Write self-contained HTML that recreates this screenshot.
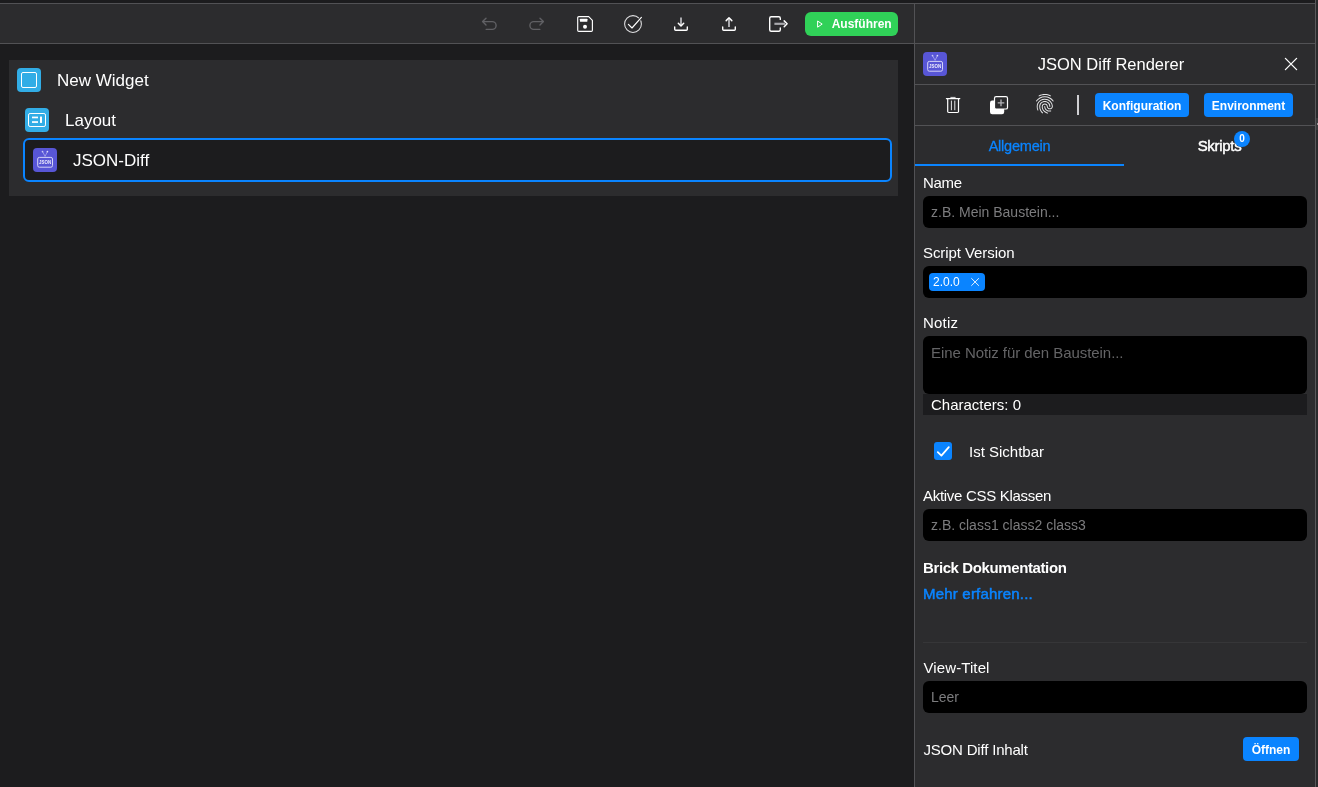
<!DOCTYPE html>
<html lang="de">
<head>
<meta charset="utf-8">
<title>JSON Diff Renderer</title>
<style>
*{box-sizing:border-box;margin:0;padding:0}
html,body{width:1318px;height:787px;overflow:hidden;background:#1c1c1e;font-family:"Liberation Sans",sans-serif;color:#fff}
.abs{position:absolute}
#root{position:relative;width:1318px;height:787px;overflow:hidden;will-change:transform}
/* frame lines */
.hl{position:absolute;height:1px;background:#525255}
.vl{position:absolute;width:1px;background:#525255}
#toolbar{position:absolute;left:0;top:4px;width:914px;height:39px;background:#2c2c2e}
#toolbarR{position:absolute;left:915px;top:4px;width:400px;height:39px;background:#2c2c2e}
#edgeR{position:absolute;left:1316px;top:0;width:2px;height:787px;background:#2a2a2c}
#rpanel{position:absolute;left:915px;top:44px;width:400px;height:743px;background:#2c2c2e}
.tbi{position:absolute;top:13px;width:20px;height:20px}
#run{position:absolute;left:805px;top:12px;width:93px;height:24px;border-radius:6px;background:#30d158;color:#fff;font-weight:700;font-size:12px;line-height:24px}
#run span{position:absolute;left:26.7px;top:0;white-space:nowrap}
/* tree */
#tree{position:absolute;left:9px;top:60px;width:889px;height:136px;background:#2c2c2e}
.ico{position:absolute;width:24px;height:24px;border-radius:4px}
.tlabel{position:absolute;font-size:17px;line-height:20px;white-space:nowrap;color:#fff}
#sel{position:absolute;left:23px;top:138px;width:869px;height:44px;border:2px solid #0a84ff;border-radius:6px;background:#1c1c1e}
/* right panel */
.lbl{position:absolute;left:923px;font-size:15px;line-height:18px;white-space:nowrap;color:#fff}
.inp{position:absolute;left:923px;width:384px;height:32px;background:#000;border-radius:6px}
.ph{position:absolute;left:8px;top:7px;font-size:14px;line-height:18px;color:#7c7c7e;white-space:nowrap}
.btn{position:absolute;background:#0a84ff;border-radius:4px;color:#fff;font-weight:700;font-size:13px;text-align:center;white-space:nowrap}
</style>
</head>
<body>
<div id="root">
  <!-- frame -->
  <div id="toolbar"></div>
  <div id="toolbarR"></div>
  <div id="rpanel"></div>
  <div id="edgeR"></div>
  <div class="hl" style="left:0;top:3px;width:1315px"></div>
  <div class="hl" style="left:0;top:43px;width:1316px"></div>
  <div class="vl" style="left:914px;top:3px;height:784px"></div>
  <div class="vl" style="left:1315px;top:0;height:787px;background:#58585a"></div>

  <div class="abs" style="left:1316px;top:118px;width:2px;height:12px;background:#3b3b3d"></div><div class="abs" style="left:1317px;top:123px;width:1px;height:2px;background:#98989a"></div>
  <!-- TOOLBAR ICONS -->
  
  <!-- undo -->
  <svg class="abs" style="left:479px;top:13px" width="20" height="20" viewBox="0 0 20 20" fill="none" stroke="#606064" stroke-width="1.4" stroke-linecap="round" stroke-linejoin="round"><path d="M7 5.2 L3.6 8.6 L7 12"/><path d="M3.8 8.6 H13.2 a3.9 3.9 0 0 1 0 7.8 H7.2"/></svg>
  <!-- redo -->
  <svg class="abs" style="left:527px;top:13px" width="20" height="20" viewBox="0 0 20 20" fill="none" stroke="#606064" stroke-width="1.4" stroke-linecap="round" stroke-linejoin="round"><path d="M13 5.2 L16.4 8.6 L13 12"/><path d="M16.2 8.6 H6.8 a3.9 3.9 0 0 0 0 7.8 H12.8"/></svg>
  <!-- save -->
  <svg class="abs" style="left:575px;top:14px" width="20" height="20" viewBox="0 0 20 20" fill="none"><path d="M3.8 2.6 H13.7 L17.4 6.3 V16.2 a1.1 1.1 0 0 1 -1.1 1.1 H3.8 a1.1 1.1 0 0 1 -1.1 -1.1 V3.7 a1.1 1.1 0 0 1 1.1 -1.1 Z" stroke="#fff" stroke-width="1.15" stroke-linejoin="round"/><rect x="4.9" y="4.8" width="7.5" height="2.9" rx="0.4" fill="#fff"/><circle cx="10" cy="12.8" r="2" fill="#fff"/></svg>
  <!-- check circle -->
  <svg class="abs" style="left:622px;top:13px" width="22" height="22" viewBox="0 0 22 22" fill="none" stroke-linecap="round" stroke-linejoin="round"><circle cx="11" cy="11" r="8.4" stroke="#e0e0e2" stroke-width="1.05"/><path d="M6.4 11.4 L10 15 L19.4 4.4" stroke="#2c2c2e" stroke-width="2.8"/><path d="M6.4 11.4 L10 15 L19.4 4.4" stroke="#fff" stroke-width="1.15"/></svg>
  <!-- download -->
  <svg class="abs" style="left:671px;top:14px" width="20" height="20" viewBox="0 0 20 20" fill="none" stroke-linecap="round" stroke-linejoin="round"><path d="M10 3.6 V11.6" stroke="#a9a9ad" stroke-width="2" stroke-linecap="butt"/><path d="M7.3 9.3 L10 12 L12.7 9.3" stroke="#fff" stroke-width="1.5"/><path d="M3.7 13 V15.3 a1 1 0 0 0 1 1 H15.3 a1 1 0 0 0 1 -1 V13" stroke="#fff" stroke-width="1.4"/></svg>
  <!-- upload -->
  <svg class="abs" style="left:719px;top:14px" width="20" height="20" viewBox="0 0 20 20" fill="none" stroke-linecap="round" stroke-linejoin="round"><path d="M10 5 V13" stroke="#a9a9ad" stroke-width="2" stroke-linecap="butt"/><path d="M7.2 6.6 L10 3.8 L12.8 6.6" stroke="#fff" stroke-width="1.5"/><path d="M3.7 13 V15.3 a1 1 0 0 0 1 1 H15.3 a1 1 0 0 0 1 -1 V13" stroke="#fff" stroke-width="1.4"/></svg>
  <!-- exit -->
  <svg class="abs" style="left:767px;top:14px" width="24" height="20" viewBox="0 0 24 20" fill="none" stroke-linecap="round" stroke-linejoin="round"><path d="M13.3 5.4 V4.2 a1.5 1.5 0 0 0 -1.5 -1.5 H4.2 a1.5 1.5 0 0 0 -1.5 1.5 V15.8 a1.5 1.5 0 0 0 1.5 1.5 H11.8 a1.5 1.5 0 0 0 1.5 -1.5 V13.9" stroke="#fff" stroke-width="1.4"/><path d="M7.4 9.8 H18" stroke="#a9a9ad" stroke-width="2.2" stroke-linecap="butt"/><path d="M17.2 6.9 L20.1 9.8 L17.2 12.7" stroke="#fff" stroke-width="1.5"/></svg>


  <div id="run"><svg class="abs" style="left:10px;top:7px" width="10" height="10" viewBox="0 0 10 10" fill="none" stroke="#fff" stroke-width="1" stroke-linejoin="round"><path d="M2.6 2 L7.2 5.1 L2.6 8.2 Z"/></svg><span id="runt">Ausführen</span></div>

  <!-- TREE -->
  <div id="tree"></div>
  <div id="sel"></div>
  
  <svg class="abs" style="left:17px;top:68px" width="24" height="24" viewBox="0 0 24 24" fill="none"><rect width="24" height="24" rx="4" fill="#32ade6"/><rect x="4.5" y="4.5" width="15" height="15" rx="1.5" stroke="#fff" stroke-width="1"/></svg>
  <svg class="abs" style="left:25px;top:108px" width="24" height="24" viewBox="0 0 24 24" fill="none"><rect width="24" height="24" rx="4" fill="#32ade6"/><rect x="3.5" y="5.5" width="17" height="13" rx="1.6" stroke="#fff" stroke-width="1"/><rect x="7" y="8.6" width="6" height="1.7" fill="#fff"/><rect x="7" y="13.2" width="6" height="1.7" fill="#fff"/><rect x="15" y="8.6" width="2" height="6.3" fill="#fff"/></svg>
  <svg class="abs" style="left:33px;top:148px" width="24" height="24" viewBox="0 0 24 24" fill="none"><rect width="24" height="24" rx="4" fill="#5856d6"/><rect x="4.7" y="9.4" width="14.8" height="9.8" rx="1.6" stroke="#d4d3f7" stroke-width="1"/><path d="M9.8 4 L12.1 8.4 L14.2 4" stroke="#a9a8ee" stroke-width="0.8" stroke-linecap="round" stroke-linejoin="round"/><circle cx="9.5" cy="3.6" r="0.85" fill="#c9c8f4"/><circle cx="14.4" cy="3.6" r="0.85" fill="#dddcf9"/><text x="12.1" y="16.3" text-anchor="middle" font-family="Liberation Sans, sans-serif" font-weight="700" font-size="6.2" fill="#ecebfd" textLength="12" lengthAdjust="spacingAndGlyphs">JSON</text></svg>

  <div class="tlabel" id="t1" style="left:57px;top:71px">New Widget</div>
  <div class="tlabel" id="t2" style="left:65px;top:111px">Layout</div>
  <div class="tlabel" id="t3" style="left:73px;top:151px">JSON-Diff</div>

  <!-- RIGHT PANEL -->
  
  <svg class="abs" style="left:923px;top:52px" width="24" height="24" viewBox="0 0 24 24" fill="none"><rect width="24" height="24" rx="4" fill="#5856d6"/><rect x="4.7" y="9.4" width="14.8" height="9.8" rx="1.6" stroke="#d4d3f7" stroke-width="1"/><path d="M9.8 4 L12.1 8.4 L14.2 4" stroke="#a9a8ee" stroke-width="0.8" stroke-linecap="round" stroke-linejoin="round"/><circle cx="9.5" cy="3.6" r="0.85" fill="#c9c8f4"/><circle cx="14.4" cy="3.6" r="0.85" fill="#dddcf9"/><text x="12.1" y="16.3" text-anchor="middle" font-family="Liberation Sans, sans-serif" font-weight="700" font-size="6.2" fill="#ecebfd" textLength="12" lengthAdjust="spacingAndGlyphs">JSON</text></svg>
  <div class="abs" id="title" style="left:915px;top:54px;width:392px;text-align:center;font-size:16.5px;line-height:20px;white-space:nowrap">JSON Diff Renderer</div>
  <svg class="abs" style="left:1283px;top:56px" width="16" height="16" viewBox="0 0 16 16" fill="none" stroke="#fff" stroke-width="1.3" stroke-linecap="round"><path d="M2.4 2.4 L13.6 13.6 M13.6 2.4 L2.4 13.6"/></svg>
  <div class="hl" style="left:915px;top:84px;width:400px"></div>
  
  <!-- trash -->
  <svg class="abs" style="left:943px;top:94px" width="20" height="22" viewBox="0 0 20 22" fill="none" stroke="#fff" stroke-linecap="round" stroke-linejoin="round"><path d="M3.4 4.6 H16.8" stroke-width="1.2"/><path d="M7.8 3.4 H12.2" stroke-width="0.9" stroke="#f0f0f2"/><path d="M4.7 4.8 V17.4 a1.1 1.1 0 0 0 1.1 1.1 H14.4 a1.1 1.1 0 0 0 1.1 -1.1 V4.8" stroke-width="1.2"/><path d="M8.4 7 V15.8 M11.8 7 V15.8" stroke-width="1" stroke="#e6e6e8"/></svg>
  <!-- duplicate -->
  <svg class="abs" style="left:988px;top:94px" width="22" height="22" viewBox="0 0 22 22" fill="none"><rect x="2" y="6.6" width="14.2" height="13.6" rx="2.2" fill="#fff"/><rect x="6.5" y="2.6" width="13" height="12.4" rx="1.6" fill="#2c2c2e" stroke="#fff" stroke-width="1.2"/><path d="M13 5.6 V12.2 M9.7 8.9 H16.3" stroke="#b4b4b8" stroke-width="1.3"/></svg>
  <!-- fingerprint -->
  <svg class="abs" style="left:1033.05px;top:92.4px" width="23.6" height="23.6" viewBox="0 0 24 24" fill="#e4e4e6"><path d="M17.81 4.47c-.08 0-.16-.02-.23-.06C15.66 3.42 14 3 12.01 3c-1.98 0-3.86.47-5.57 1.41-.24.13-.54.04-.68-.2-.13-.24-.04-.55.2-.68C7.82 2.52 9.86 2 12.01 2c2.13 0 3.99.47 6.03 1.52.25.13.34.43.21.67-.09.18-.26.28-.44.28zM3.5 9.72c-.1 0-.2-.03-.29-.09-.23-.16-.28-.47-.12-.7.99-1.4 2.25-2.5 3.75-3.27C9.98 4.04 14 4.03 17.15 5.65c1.5.77 2.76 1.86 3.75 3.25.16.22.11.54-.12.7-.23.16-.54.11-.7-.12-.9-1.26-2.04-2.25-3.39-2.94-2.87-1.47-6.54-1.47-9.4.01-1.36.7-2.5 1.7-3.4 2.96-.08.14-.23.21-.39.21zm6.25 12.07c-.13 0-.26-.05-.35-.15-.87-.87-1.34-1.43-2.01-2.64-.69-1.23-1.05-2.73-1.05-4.34 0-2.97 2.54-5.39 5.66-5.39s5.66 2.42 5.66 5.39c0 .28-.22.5-.5.5s-.5-.22-.5-.5c0-2.42-2.09-4.39-4.66-4.39-2.57 0-4.66 1.97-4.66 4.39 0 1.44.32 2.77.93 3.85.64 1.15 1.08 1.64 1.85 2.42.19.2.19.51 0 .71-.11.1-.24.15-.37.15zm7.17-1.85c-1.19 0-2.24-.3-3.1-.89-1.49-1.01-2.38-2.65-2.38-4.39 0-.28.22-.5.5-.5s.5.22.5.5c0 1.41.72 2.74 1.94 3.56.71.48 1.54.71 2.54.71.24 0 .64-.03 1.04-.1.27-.05.53.13.58.41.05.27-.13.53-.41.58-.57.11-1.07.12-1.21.12zM14.91 22c-.04 0-.09-.01-.13-.02-1.59-.44-2.63-1.03-3.72-2.1-1.4-1.39-2.17-3.24-2.17-5.22 0-1.62 1.38-2.94 3.08-2.94 1.7 0 3.08 1.32 3.08 2.94 0 1.07.93 1.94 2.08 1.94s2.08-.87 2.08-1.94c0-3.77-3.25-6.83-7.25-6.83-2.84 0-5.44 1.58-6.61 4.03-.39.81-.59 1.76-.59 2.8 0 .78.07 2.01.67 3.61.1.26-.03.55-.29.64-.26.1-.55-.04-.64-.29-.49-1.31-.73-2.61-.73-3.96 0-1.2.23-2.29.68-3.24 1.33-2.79 4.28-4.6 7.51-4.6 4.55 0 8.25 3.51 8.25 7.83 0 1.62-1.38 2.94-3.08 2.94s-3.08-1.32-3.08-2.94c0-1.07-.93-1.94-2.08-1.94s-2.08.87-2.08 1.94c0 1.71.66 3.31 1.87 4.51.95.94 1.86 1.46 3.27 1.85.27.07.42.35.35.61-.05.23-.26.38-.47.38z"/></svg>
  <div class="abs" style="left:1077px;top:95px;width:2px;height:20px;background:#cfcfd2"></div>
  <div class="btn" id="bkonf" style="left:1095px;top:93px;width:94px;height:24px;line-height:26px;font-size:12px">Konfiguration</div>
  <div class="btn" id="benv" style="left:1204px;top:93px;width:89px;height:24px;line-height:26px;font-size:12px">Environment</div>

  <div class="hl" style="left:915px;top:125px;width:400px"></div>
  
  <div class="abs" id="tab1" style="left:915px;top:137px;width:209px;text-align:center;letter-spacing:-0.22px;-webkit-text-stroke:0.3px #0a84ff;font-size:14.5px;line-height:18px;color:#0a84ff;white-space:nowrap">Allgemein</div>
  <div class="abs" style="left:915px;top:164px;width:209px;height:2px;background:#0a84ff"></div>
  <div class="abs" id="tab2" style="left:1124px;top:137px;width:191px;text-align:center;font-size:15px;line-height:18px;color:#fff;white-space:nowrap;-webkit-text-stroke:0.45px #fff;letter-spacing:-0.3px">Skripts</div>
  <div class="abs" style="left:1234px;top:131px;width:16px;height:16px;border-radius:8px;background:#0a84ff;color:#fff;font-size:10px;font-weight:700;line-height:16px;text-align:center">0</div>

  
  <div class="lbl" id="l1" style="top:174px;letter-spacing:-0.3px">Name</div>
  <div class="inp" style="top:196px"><div class="ph" id="p1">z.B. Mein Baustein...</div></div>

  <div class="lbl" id="l2" style="top:244px;letter-spacing:-0.08px">Script Version</div>
  <div class="inp" style="top:266px">
    <div class="abs" id="tag" style="left:6px;top:7px;width:56px;height:18px;border-radius:4px;background:#0a84ff"></div>
    <div class="abs" id="tagt" style="left:10px;top:7px;font-size:12px;line-height:18px;color:#fff">2.0.0</div>
    <svg class="abs" style="left:47px;top:11px" width="10" height="10" viewBox="0 0 10 10" fill="none" stroke="#fff" stroke-width="0.9" stroke-linecap="round"><path d="M1.6 1.5 L8.6 8.5 M8.6 1.5 L1.6 8.5"/></svg>
  </div>

  <div class="lbl" id="l3" style="top:314px;letter-spacing:0.2px">Notiz</div>
  <div class="inp" style="top:336px;height:58px"><div class="ph" id="p2" style="font-size:15px;top:8px;color:#646466;letter-spacing:-0.06px">Eine Notiz für den Baustein...</div></div>
  <div class="abs" style="left:923px;top:394px;width:384px;height:21px;background:#1c1c1e"></div>
  <div class="abs" id="l4" style="left:931px;top:396px;font-size:15px;line-height:18px;color:#fff;white-space:nowrap">Characters: 0</div>

  <div class="abs" style="left:934px;top:442px;width:18px;height:18px;border-radius:3px;background:#0a84ff"></div>
  <svg class="abs" style="left:934px;top:442px" width="18" height="18" viewBox="0 0 18 18" fill="none" stroke="#fff" stroke-width="1.8" stroke-linecap="round" stroke-linejoin="round"><path d="M3.8 10.2 L7.4 13.6 L14.8 5.2"/></svg>
  <div class="abs" id="l5" style="left:969px;top:443px;font-size:15px;line-height:18px;color:#fff;white-space:nowrap">Ist Sichtbar</div>

  <div class="lbl" id="l6" style="top:487px;letter-spacing:-0.3px">Aktive CSS Klassen</div>
  <div class="inp" style="top:509px"><div class="ph" id="p3">z.B. class1 class2 class3</div></div>

  <div class="lbl" id="l7" style="top:559px;font-weight:700;letter-spacing:-0.39px">Brick Dokumentation</div>
  <div class="lbl" id="l8" style="top:585px;color:#0a84ff;-webkit-text-stroke:0.5px #0a84ff;letter-spacing:0.2px">Mehr erfahren...</div>

  <div class="abs" style="left:923px;top:642px;width:384px;height:1px;background:#363638"></div>

  <div class="lbl" id="l9" style="top:659px;left:923.5px;letter-spacing:0.1px">View-Titel</div>
  <div class="inp" style="top:681px"><div class="ph" id="p4">Leer</div></div>

  <div class="lbl" id="l10" style="top:741px;left:923.5px;letter-spacing:-0.19px">JSON Diff Inhalt</div>
  <div class="btn" id="boff" style="left:1243px;top:737px;width:56px;height:24px;line-height:26px;font-size:12px">Öffnen</div>


</div>
</body>
</html>
